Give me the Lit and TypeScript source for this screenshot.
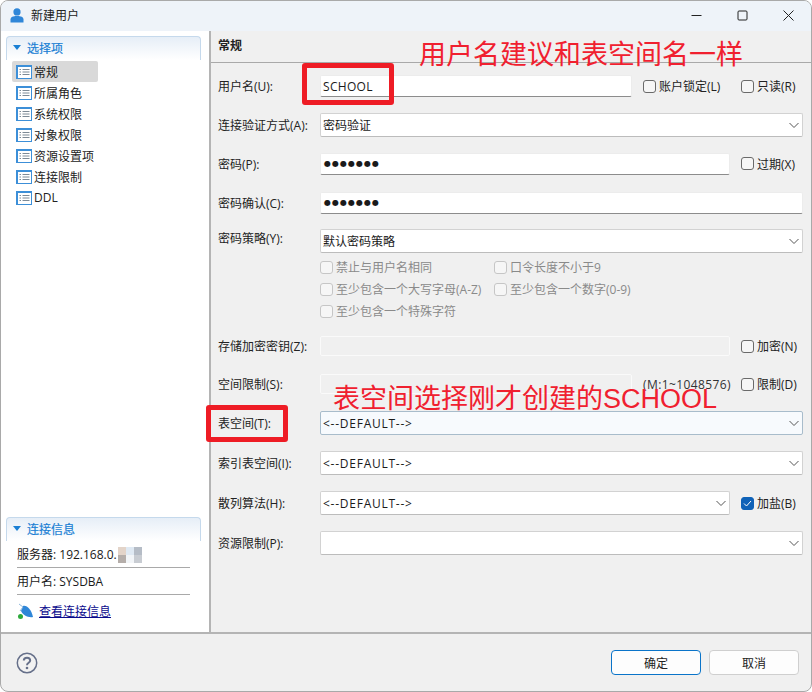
import { LitElement, html, css, svg } from "lit";
import { customElement } from "lit/decorators.js";

const chevron = html`<svg class="chev" width="12" height="12" viewBox="0 0 12 12"><path d="M1.5 4 L6 8.5 L10.5 4" fill="none" stroke="#555" stroke-width="1"/></svg>`;
const listIcon = html`<svg class="licon" width="16" height="14" viewBox="0 0 16 14">
  <rect x="0.5" y="0.5" width="15" height="13" fill="#fff" stroke="#3c8fd8"/>
  <rect x="0" y="0" width="16" height="2" fill="#3c8fd8"/>
  <rect x="0" y="0" width="2" height="14" fill="#3c8fd8"/>
  ${[4, 6.5, 9].map((y) => svg`<path d="M3.5 ${y+.5}H5M6.5 ${y+.5}H13.5" stroke="#7d8a96" stroke-width="1"/>`)}
</svg>`;

const navItems = ["常规", "所属角色", "系统权限", "对象权限", "资源设置项", "连接限制", "DDL"];

@customElement("app-root")
export class AppRoot extends LitElement {
  static styles = css`
    :host { display: block; width: 812px; height: 692px; font-family: "Open Sans", "Noto Sans CJK SC", sans-serif; font-size: 12px; color: #1a1a1a; background: #fff; }
    * { box-sizing: border-box; }
    .win { position: relative; width: 812px; height: 692px; background: #f0f0f0; border: 1px solid #a9a9a9; border-radius: 8px; overflow: hidden; display: flex; flex-direction: column; }
    .title { height: 30px; flex: none; display: flex; align-items: center; padding: 0 0 2px 9px; background: #eef3f9; }
    .title .t { margin-left: 7px; color: #222; }
    .wctl { margin-left: auto; display: flex; }
    .wctl span { width: 46px; height: 28px; display: flex; align-items: center; justify-content: center; }
    .main { flex: 1; display: flex; min-height: 0; }
    .side { width: 210px; flex: none; background: #fff; border-right: 2px solid #b4b4b4; padding: 5px 8px 0 5px; display: flex; flex-direction: column; }
    .sec { height: 24px; flex: none; border: 1px solid #c5d9ec; border-bottom: none; border-radius: 4px 4px 0 0; background: linear-gradient(#e6eef7, #fff); display: flex; align-items: center; padding: 0 0 2px 6px; gap: 6px; color: #1a7fd4; font-size: 12px; -webkit-text-stroke: 0.2px #1a7fd4; }
    .tri { width: 0; height: 0; border: 4px solid transparent; border-top: 5px solid #1a7fd4; border-bottom: none; }
    .nav { padding: 1px 0 0 6px; display: flex; flex-direction: column; }
    .item { height: 21px; width: 86px; display: flex; align-items: center; gap: 2px; padding-left: 4px; white-space: nowrap; color: #222; }
    .item.on { background: #d9d9d9; border-radius: 2px; }
    .conn { margin-top: auto; height: 115px; display: flex; flex-direction: column; }
    .info { margin: 0 0 0 11px; width: 173px; height: 27px; flex: none; display: flex; align-items: center; border-bottom: 1px solid #a9a9a9; white-space: pre; position: relative; }
    .mosaic { position: absolute; left: 101px; top: 6px; display: grid; grid-template-columns: repeat(3, 8px); grid-auto-rows: 8px; }
    .linkrow { margin: 6px 0 0 11px; display: flex; align-items: center; gap: 5px; height: 20px; }
    .linkrow a { color: #0a0a8c; text-decoration: underline; }
    .right { flex: 1; min-width: 0; display: flex; flex-direction: column; }
    .rhead { height: 32px; flex: none; display: flex; align-items: center; padding: 0 0 3px 7px; font-weight: 700; border-bottom: 1px solid #a9a9a9; color: #222; }
    .form { padding: 4px 8px 0 7px; }
    .row { height: 38.8px; display: flex; align-items: center; }
    .row.tall { height: 40px; }
    .row.mid { height: 38px; }
    .row.policy { height: 24px; margin: 7.2px 0 3px; }
    .lab { width: 102px; flex: none; white-space: nowrap; color: #222; }
    .lab.up { margin-bottom: 6px; }
    .inp { flex: 1; min-width: 0; height: 22px; background: #fff; border: 1px solid #ececec; border-bottom: 1px solid #8c8c8c; border-radius: 2px; display: flex; align-items: center; padding-left: 2px; }
    .inp.name { letter-spacing: 0.3px; }
    .inp.dots { letter-spacing: 1px; font-size: 8px; font-family: "DejaVu Sans", sans-serif; padding-left: 3px; }
    .inp.off { background: #f0f0f0; border: 1px solid #fafafa; height: 20px; }
    .sel { flex: 1; min-width: 0; height: 24px; background: #fff; border: 1px solid #d2d2d2; border-bottom-color: #bcbcbc; border-radius: 2px; display: flex; align-items: center; padding: 0 2px 0 2px; }
    .sel.focus { background: #f7fafd; border-color: #a8bccb; }
    .def { letter-spacing: 0.75px; }
    .chev { margin-left: auto; }
    .trail { flex: none; display: flex; align-items: center; gap: 3px; white-space: nowrap; color: #222; }
    .cb { width: 13px; height: 13px; flex: none; border: 1px solid #6a6a6a; border-radius: 3px; background: #f6f6f6; display: block; }
    .cb.dis { border-color: #c6c6c6; }
    .cb.checked { background: #0f62b8; border-color: #0f62b8; display: flex; align-items: center; justify-content: center; }
    .t1 { margin-left: 11px; width: 88px; }
    .t2 { margin-left: 10px; width: 62px; }
    .w-x { margin-left: 11px; width: 62px; }
    .t3 { margin-left: 10px; width: 62px; }
    .opts { padding-left: 102px; }
    .opt { height: 22px; display: flex; align-items: center; }
    .opt .trail { color: #8a8a8a; width: 174px; }
    .range { flex: none; white-space: nowrap; margin-left: 11px; color: #333; width: 88px; letter-spacing: 0.4px; }
    .foot { height: 59px; flex: none; border-top: 2px solid #b4b4b4; display: flex; align-items: center; padding: 0 12px 0 15px; }
    .btn { width: 90px; height: 25px; border: 1px solid #cfcfcf; border-radius: 4px; background: #fdfdfd; display: flex; align-items: center; justify-content: center; color: #222; }
    .btn.pri { border-color: #0a74c9; margin-right: 8px; margin-left: auto; }
    .note { position: absolute; color: #f0202f; white-space: nowrap; font-size: 27px; line-height: 32px; font-family: "Liberation Sans", "Noto Sans CJK SC", sans-serif; }
    .box { position: absolute; border: 5px solid #ee1c25; border-radius: 3px; }
  `;

  private cb(label: string, cls = "") {
    return html`<label class="trail ${cls}"><span class="cb"></span>${label}</label>`;
  }
  private dcb(label: string) {
    return html`<label class="trail"><span class="cb dis"></span>${label}</label>`;
  }

  render() {
    const mos = ["#e3d4c9", "#dfe9f3", "#b5bcc6", "#b5aeaa", "#f2f5f8", "#c8ccd2"];
    return html`<div class="win">
      <div class="title">
        <svg width="14" height="15" viewBox="0 0 14 15"><circle cx="7" cy="3.9" r="3.6" fill="#2f86d8"/><path d="M0.5 14.5V11.5C0.5 9 3 8 7 8S13.5 9 13.5 11.5V14.5Z" fill="#2f86d8"/></svg>
        <span class="t">新建用户</span>
        <div class="wctl">
          <span><svg width="11" height="11" viewBox="0 0 11 11"><path d="M0.5 5.5H10.5" stroke="#222"/></svg></span>
          <span><svg width="11" height="11" viewBox="0 0 11 11"><rect x="1" y="1" width="9" height="9" rx="1" fill="none" stroke="#222"/></svg></span>
          <span><svg width="11" height="11" viewBox="0 0 11 11"><path d="M0.5 0.5L10.5 10.5M10.5 0.5L0.5 10.5" stroke="#222"/></svg></span>
        </div>
      </div>
      <div class="main">
        <aside class="side">
          <div class="sec"><i class="tri"></i>选择项</div>
          <div class="nav">
            ${navItems.map((n, i) => html`<div class="item ${i === 0 ? "on" : ""}">${listIcon}<span>${n}</span></div>`)}
          </div>
          <div class="conn">
            <div class="sec"><i class="tri"></i>连接信息</div>
            <div class="info">服务器: 192.168.0.<span class="mosaic">${mos.map((c) => html`<i style="background:${c}"></i>`)}</span></div>
            <div class="info">用户名: SYSDBA</div>
            <div class="linkrow">
              <svg width="17" height="17" viewBox="0 0 17 17"><path d="M6 3C10 2 14 6 16 14C11 15 6 12 4 8Z" fill="#2f86d8"/><path d="M2 1L6 4L3 8" stroke="#8fb8dc" fill="none"/><circle cx="3.5" cy="13.5" r="2.5" fill="#2eaa3c"/></svg>
              <a>查看连接信息</a>
            </div>
          </div>
        </aside>
        <section class="right">
          <div class="rhead">常规</div>
          <div class="form">
            <div class="row"><span class="lab">用户名(U):</span><div class="inp name">SCHOOL</div>${this.cb("账户锁定(L)", "t1")}${this.cb("只读(R)", "t2")}</div>
            <div class="row"><span class="lab">连接验证方式(A):</span><div class="sel">密码验证${chevron}</div></div>
            <div class="row"><span class="lab">密码(P):</span><div class="inp dots">●●●●●●●</div>${this.cb("过期(X)", "w-x")}</div>
            <div class="row"><span class="lab">密码确认(C):</span><div class="inp dots">●●●●●●●</div></div>
            <div class="row policy"><span class="lab up">密码策略(Y):</span><div class="sel">默认密码策略${chevron}</div></div>
            <div class="opts">
              <div class="opt">${this.dcb("禁止与用户名相同")}${this.dcb("口令长度不小于9")}</div>
              <div class="opt">${this.dcb("至少包含一个大写字母(A-Z)")}${this.dcb("至少包含一个数字(0-9)")}</div>
              <div class="opt">${this.dcb("至少包含一个特殊字符")}</div>
            </div>
            <div class="row mid" style="margin-top:5px"><span class="lab">存储加密密钥(Z):</span><div class="inp off"></div>${this.cb("加密(N)", "w-x")}</div>
            <div class="row mid"><span class="lab">空间限制(S):</span><div class="inp off"></div><span class="range">(M:1~1048576)</span>${this.cb("限制(D)", "t3")}</div>
            <div class="row tall"><span class="lab">表空间(T):</span><div class="sel focus"><span class="def">&lt;--DEFAULT--&gt;</span>${chevron}</div></div>
            <div class="row tall"><span class="lab">索引表空间(I):</span><div class="sel"><span class="def">&lt;--DEFAULT--&gt;</span>${chevron}</div></div>
            <div class="row tall"><span class="lab">散列算法(H):</span><div class="sel"><span class="def">&lt;--DEFAULT--&gt;</span>${chevron}</div>
              <label class="trail w-x"><span class="cb checked"><svg width="9" height="9" viewBox="0 0 9 9"><path d="M1 4.5L3.5 7L8 2" fill="none" stroke="#fff"/></svg></span>加盐(B)</label></div>
            <div class="row tall"><span class="lab">资源限制(P):</span><div class="sel">${chevron}</div></div>
          </div>
        </section>
      </div>
      <div class="foot">
        <svg width="22" height="22" viewBox="0 0 22 22"><circle cx="11" cy="11" r="9.7" fill="#f2f2f2" stroke="#66708a" stroke-width="1.5"/><path d="M7.8 8.6C7.8 6.8 9.2 5.7 11 5.7S14.2 6.8 14.2 8.5C14.2 10.8 11 10.8 11 13.2" fill="none" stroke="#66708a" stroke-width="2"/><circle cx="11" cy="16" r="1.3" fill="#66708a"/></svg>
        <div class="btn pri">确定</div>
        <div class="btn">取消</div>
      </div>
      <span class="note" style="left:418px;top:38px">用户名建议和表空间名一样</span>
      <span class="note" style="left:332px;top:382px">表空间选择刚才创建的SCHOOL</span>
      <i class="box" style="left:301px;top:62px;width:92px;height:42px"></i>
      <i class="box" style="left:205px;top:404px;width:82px;height:37px"></i>
    </div>`;
  }
}
